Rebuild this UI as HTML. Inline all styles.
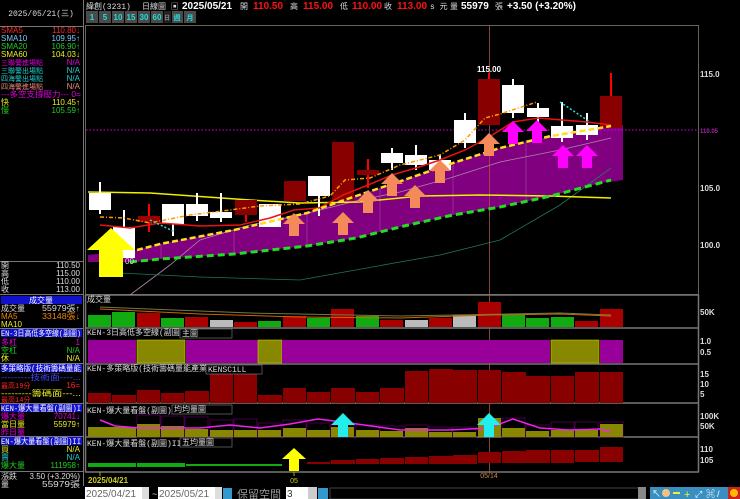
<!DOCTYPE html>
<html><head><meta charset="utf-8"><style>
html,body{margin:0;padding:0;background:#000;width:740px;height:499px;overflow:hidden}
svg{display:block}
text{font-family:"Liberation Sans","Noto Sans CJK TC",sans-serif}
.c{font-family:"Liberation Mono","Noto Sans CJK TC",monospace;font-size:8px}
.s{font-size:7px}
</style></head><body>
<svg width="740" height="499" viewBox="0 0 740 499" xmlns="http://www.w3.org/2000/svg">
<rect width="740" height="499" fill="#000"/>
<!-- left panel -->
<line x1="83.5" y1="0" x2="83.5" y2="486" stroke="#777"/>
<line x1="0" y1="26.5" x2="83" y2="26.5" stroke="#777"/>
<text x="41" y="16" fill="#ddd" font-size="8" text-anchor="middle" class="c">2025/05/21(三)</text>
<g class="c">
<text x="1" y="33" fill="#f22">SMA5</text><text x="80" y="33" fill="#f22" text-anchor="end">110.80↓</text>
<text x="1" y="41" fill="#7cf">SMA10</text><text x="80" y="41" fill="#7cf" text-anchor="end">109.95↑</text>
<text x="1" y="49" fill="#2c2">SMA20</text><text x="80" y="49" fill="#2c2" text-anchor="end">106.90↑</text>
<text x="1" y="57" fill="#ee2">SMA60</text><text x="80" y="57" fill="#ee2" text-anchor="end">104.03↓</text>
<text x="1" y="65" fill="#d0d" class="c s">三聯警進場點</text><text x="80" y="65" fill="#d0d" text-anchor="end">N/A</text>
<text x="1" y="73" fill="#2cc" class="c s">三聯警出場點</text><text x="80" y="73" fill="#2cc" text-anchor="end">N/A</text>
<text x="1" y="81" fill="#2cc" class="c s">四海警出場點</text><text x="80" y="81" fill="#2cc" text-anchor="end">N/A</text>
<text x="1" y="89" fill="#e87" class="c s">四海警進場點</text><text x="80" y="89" fill="#e87" text-anchor="end">N/A</text>
<text x="1" y="97" fill="#d0d" textLength="80" lengthAdjust="spacingAndGlyphs">---多空支撐壓力--- 0=</text>
<text x="1" y="105" fill="#ee2">快</text><text x="80" y="105" fill="#ee2" text-anchor="end">110.45↑</text>
<text x="1" y="113" fill="#2c2">慢</text><text x="80" y="113" fill="#2c2" text-anchor="end">105.59↑</text>
</g>
<line x1="0" y1="261.5" x2="83" y2="261.5" stroke="#777"/>
<g class="c" fill="#ddd">
<text x="1" y="268">開</text><text x="80" y="268" text-anchor="end">110.50</text>
<text x="1" y="276">高</text><text x="80" y="276" text-anchor="end">115.00</text>
<text x="1" y="284">低</text><text x="80" y="284" text-anchor="end">110.00</text>
<text x="1" y="292">收</text><text x="80" y="292" text-anchor="end">113.00</text>
</g>
<line x1="0" y1="294.5" x2="83" y2="294.5" stroke="#777"/>
<rect x="1" y="296" width="81" height="8" fill="#11c"/>
<text x="41" y="303" fill="#fff" class="c" text-anchor="middle">成交量</text>
<g class="c">
<text x="1" y="311" fill="#ddd">成交量</text><text x="80" y="311" fill="#ddd" text-anchor="end" textLength="38" lengthAdjust="spacingAndGlyphs">55979張↑</text>
<text x="1" y="319" fill="#e80">MA5</text><text x="80" y="319" fill="#e80" text-anchor="end" textLength="38" lengthAdjust="spacingAndGlyphs">33148張↓</text>
<text x="1" y="327" fill="#ee2">MA10</text>
</g>
<line x1="0" y1="328.5" x2="83" y2="328.5" stroke="#777"/>
<rect x="1" y="329" width="81" height="8" fill="#11c"/>
<text x="1" y="336" fill="#fff" class="c" textLength="80" lengthAdjust="spacingAndGlyphs">EN-3日高低多空線(副圖)</text>
<g class="c">
<text x="1" y="345" fill="#d0d">多杠</text><text x="80" y="345" fill="#d0d" text-anchor="end">1</text>
<text x="1" y="353" fill="#2c2">空杠</text><text x="80" y="353" fill="#2c2" text-anchor="end">N/A</text>
<text x="1" y="361" fill="#ee2">休</text><text x="80" y="361" fill="#ee2" text-anchor="end">N/A</text>
</g>
<line x1="0" y1="363.5" x2="83" y2="363.5" stroke="#777"/>
<rect x="1" y="364" width="81" height="8" fill="#11c"/>
<text x="1" y="371" fill="#fff" class="c" textLength="80" lengthAdjust="spacingAndGlyphs">多策略版(技術籌碼量能</text>
<g class="c">
<text x="1" y="380" fill="#44f" textLength="80" lengthAdjust="spacingAndGlyphs">---------技術面----...</text>
<text x="1" y="388" fill="#f22" class="c s">最高19分</text><text x="80" y="388" fill="#f22" text-anchor="end">16=</text>
<text x="1" y="396" fill="#ee2" textLength="80" lengthAdjust="spacingAndGlyphs">---------籌碼面---...</text>
<text x="1" y="402" fill="#f22" class="c s">最高14分</text>
</g>
<line x1="0" y1="403.5" x2="83" y2="403.5" stroke="#777"/>
<rect x="1" y="404" width="81" height="8" fill="#11c"/>
<text x="1" y="411" fill="#fff" class="c" textLength="80" lengthAdjust="spacingAndGlyphs">KEN-爆大量看盤(副圖)I</text>
<g class="c">
<text x="1" y="419" fill="#d0d">爆大量</text><text x="80" y="419" fill="#d0d" text-anchor="end">70741↓</text>
<text x="1" y="427" fill="#ee2">當日量</text><text x="80" y="427" fill="#ee2" text-anchor="end">55979↑</text>
<text x="1" y="435" fill="#d0d">昨日量</text>
</g>
<line x1="0" y1="436.5" x2="83" y2="436.5" stroke="#777"/>
<rect x="1" y="437" width="81" height="8" fill="#11c"/>
<text x="1" y="444" fill="#fff" class="c" textLength="80" lengthAdjust="spacingAndGlyphs">EN-爆大量看盤(副圖)II</text>
<g class="c">
<text x="1" y="452" fill="#ee2">買</text><text x="80" y="452" fill="#ee2" text-anchor="end">N/A</text>
<text x="1" y="460" fill="#2cc">賣</text><text x="80" y="460" fill="#2cc" text-anchor="end">N/A</text>
<text x="1" y="468" fill="#2c2">爆大量</text><text x="80" y="468" fill="#2c2" text-anchor="end">111958↑</text>
</g>
<line x1="0" y1="471.5" x2="83" y2="471.5" stroke="#777"/>
<g class="c" fill="#ddd">
<text x="1" y="479">漲跌</text><text x="80" y="479" text-anchor="end">3.50 (+3.20%)</text>
<text x="1" y="487">量</text><text x="80" y="487" text-anchor="end" textLength="38" lengthAdjust="spacingAndGlyphs">55979張</text>
</g>

<!-- header -->
<text x="86" y="9" fill="#ddd" class="c">緯創(3231)</text>
<text x="142" y="9" fill="#ddd" class="c">日線圖 ▣</text>
<text x="182" y="9" font-size="10" font-weight="bold" fill="#fff">2025/05/21</text>
<text x="240" y="9" fill="#ddd" class="c">開</text><text x="253" y="9" font-size="10" font-weight="bold" fill="#f11">110.50</text>
<text x="290" y="9" fill="#ddd" class="c">高</text><text x="303" y="9" font-size="10" font-weight="bold" fill="#f11">115.00</text>
<text x="340" y="9" fill="#ddd" class="c">低</text><text x="352" y="9" font-size="10" font-weight="bold" fill="#f11">110.00</text>
<text x="384" y="9" fill="#ddd" class="c">收</text><text x="397" y="9" font-size="10" font-weight="bold" fill="#f11">113.00</text>
<text x="430" y="9" fill="#ddd" class="c">s 元</text>
<text x="450" y="9" fill="#ddd" class="c">量</text><text x="461" y="9" font-size="10" font-weight="bold" fill="#fff">55979</text>
<text x="495" y="9" fill="#ddd" class="c">張</text>
<text x="507" y="9" font-size="10" font-weight="bold" fill="#fff">+3.50 (+3.20%)</text>
<!-- tabs -->
<g font-size="8" fill="#2dd" font-weight="bold">
<rect x="86" y="11" width="12" height="12" fill="#4a4a4a"/><text x="92" y="20" text-anchor="middle">1</text>
<rect x="99" y="11" width="12" height="12" fill="#4a4a4a"/><text x="105" y="20" text-anchor="middle">5</text>
<rect x="112" y="11" width="12" height="12" fill="#4a4a4a"/><text x="118" y="20" text-anchor="middle">10</text>
<rect x="125" y="11" width="12" height="12" fill="#4a4a4a"/><text x="131" y="20" text-anchor="middle">15</text>
<rect x="138" y="11" width="12" height="12" fill="#4a4a4a"/><text x="144" y="20" text-anchor="middle">30</text>
<rect x="151" y="11" width="12" height="12" fill="#4a4a4a"/><text x="157" y="20" text-anchor="middle">60</text>
<rect x="164" y="11" width="7" height="12" fill="#222"/><text x="167" y="20" text-anchor="middle" fill="#888" font-size="6">日</text>
<rect x="172" y="11" width="11" height="12" fill="#4a4a4a"/><text x="177" y="20" text-anchor="middle" font-size="7">週</text>
<rect x="184" y="11" width="12" height="12" fill="#4a4a4a"/><text x="190" y="20" text-anchor="middle" font-size="7">月</text>
</g>

<!-- chart frames -->
<g fill="none" stroke="#665" stroke-width="1">
<rect x="85.5" y="25.5" width="613" height="269"/>
</g>
<g stroke="#777" stroke-width="1.5">
<line x1="85" y1="295" x2="699" y2="295"/>
<line x1="85" y1="328" x2="699" y2="328"/>
<line x1="85" y1="364" x2="699" y2="364"/>
<line x1="85" y1="403" x2="699" y2="403"/>
<line x1="85" y1="437" x2="699" y2="437"/>
<line x1="85" y1="472" x2="699" y2="472"/>
<line x1="698.5" y1="295" x2="698.5" y2="472"/>
<line x1="85.5" y1="295" x2="85.5" y2="472"/>
</g>
<!-- price axis -->
<g font-size="8" fill="#ddd" font-weight="bold">
<text x="700" y="77">115.0</text>
<text x="700" y="191">105.0</text>
<text x="700" y="248">100.0</text>
<text x="700" y="133" fill="#a2a" font-size="6">110.05</text>
<text x="700" y="315">50K</text>
<text x="700" y="344">1.0</text>
<text x="700" y="355">0.5</text>
<text x="700" y="377">15</text>
<text x="700" y="387">10</text>
<text x="700" y="397">5</text>
<text x="700" y="419">100K</text>
<text x="700" y="429">50K</text>
<text x="700" y="452">110</text>
<text x="700" y="463">105</text>
</g>

<!-- purple band -->
<polygon fill="#800080" points="88,255 137,250 160,244 234,230 307,213 356,196 404,180 453,163 500,148 551,136 600,128 623,125 623,180 600,183 551,196 500,207 453,215 404,226 356,238 307,246 234,254 160,259 137,262 88,262"/>
<g stroke="#a04aa0" stroke-width="0.6">
<line x1="161" y1="244" x2="161" y2="259"/><line x1="234" y1="230" x2="234" y2="254"/><line x1="307" y1="213" x2="307" y2="246"/><line x1="380" y1="188" x2="380" y2="232"/><line x1="453" y1="163" x2="453" y2="215"/><line x1="526" y1="140" x2="526" y2="200"/>
</g>
<polyline fill="none" stroke="#a8a" stroke-width="0.8" points="130,295 170,265 200,240 250,225 300,215 360,200 400,192 450,178 500,162 560,150 611,138"/>
<polyline fill="none" stroke="#275" stroke-width="0.8" points="100,272 200,277 300,280 400,262 440,255 500,240 560,205 611,168"/>
<line x1="86" y1="130" x2="698" y2="130" stroke="#d0d" stroke-width="1" stroke-dasharray="1.5,2"/>
<line x1="489.5" y1="26" x2="489.5" y2="472" stroke="#a54" stroke-width="0.8"/>
<polyline fill="none" stroke="#ee0" stroke-width="1.5" points="88,192 150,193 250,200 300,203 360,202 420,196 480,195 550,196 611,198"/>

<!-- candles -->
<g stroke-width="2">
<line x1="100" y1="182" x2="100" y2="214" stroke="#fff"/><rect x="89" y="193" width="22" height="17" fill="#fff"/>
<line x1="124" y1="210" x2="124" y2="258" stroke="#fff"/><rect x="113" y="227" width="22" height="31" fill="#fff"/>
<line x1="149" y1="204" x2="149" y2="232" stroke="#f00"/><rect x="138" y="216" width="22" height="6" fill="#900"/>
<line x1="173" y1="204" x2="173" y2="236" stroke="#fff"/><rect x="162" y="204" width="22" height="20" fill="#fff"/>
<line x1="197" y1="193" x2="197" y2="221" stroke="#fff"/><rect x="186" y="204" width="22" height="12" fill="#fff"/>
<line x1="221" y1="193" x2="221" y2="222" stroke="#fff"/><rect x="210" y="212" width="22" height="6" fill="#fff"/>
<line x1="246" y1="200" x2="246" y2="222" stroke="#f00"/><rect x="235" y="200" width="22" height="15" fill="#800"/>
<line x1="270" y1="204" x2="270" y2="227" stroke="#fff"/><rect x="259" y="204" width="22" height="23" fill="#fff"/>
<rect x="284" y="181" width="22" height="20" fill="#800"/>
<line x1="319" y1="176" x2="319" y2="216" stroke="#fff"/><rect x="308" y="176" width="22" height="20" fill="#fff"/>
<rect x="332" y="142" width="22" height="58" fill="#800"/>
<line x1="368" y1="159" x2="368" y2="188" stroke="#f00"/><rect x="357" y="170" width="22" height="5" fill="#800"/>
<line x1="392" y1="148" x2="392" y2="170" stroke="#fff"/><rect x="381" y="153" width="22" height="10" fill="#fff"/>
<line x1="416" y1="145" x2="416" y2="170" stroke="#fff"/><rect x="405" y="155" width="22" height="10" fill="#fff"/>
<line x1="440" y1="155" x2="440" y2="175" stroke="#fff"/><rect x="429" y="160" width="22" height="10" fill="#fff"/>
<line x1="465" y1="113" x2="465" y2="148" stroke="#fff"/><rect x="454" y="120" width="22" height="23" fill="#fff"/>
<line x1="489" y1="73" x2="489" y2="125" stroke="#f00"/><rect x="478" y="79" width="22" height="46" fill="#800"/>
<line x1="513" y1="79" x2="513" y2="118" stroke="#fff"/><rect x="502" y="85" width="22" height="28" fill="#fff"/>
<line x1="538" y1="103" x2="538" y2="123" stroke="#fff"/><rect x="527" y="108" width="22" height="9" fill="#fff"/>
<line x1="562" y1="102" x2="562" y2="142" stroke="#fff"/><rect x="551" y="126" width="22" height="12" fill="#fff"/>
<line x1="587" y1="113" x2="587" y2="140" stroke="#fff"/><rect x="576" y="125" width="22" height="10" fill="#fff"/>
<line x1="611" y1="73" x2="611" y2="128" stroke="#f00"/><rect x="600" y="96" width="22" height="32" fill="#800"/>
</g>
<text x="489" y="72" fill="#fff" font-size="8" font-weight="bold" text-anchor="middle">115.00</text>
<polyline fill="none" stroke="#e11" stroke-width="1.5" points="100,225 130,228 160,223 200,226 240,225 270,218 294,210 319,208 343,195 368,185 392,175 416,168 440,160 465,150 489,137 513,122 538,118 562,120 587,122 611,125"/>
<polyline fill="none" stroke="#f90" stroke-width="1.5" stroke-dasharray="4,2,1,2" points="100,217 124,218 150,223 190,215 230,210 260,206 300,204 330,196 345,180 370,178 400,165 440,155 465,140 485,118 500,114 537,102"/>
<polyline fill="none" stroke="#3dd" stroke-width="1.5" stroke-dasharray="2,2" points="560,102 590,122"/>
<polyline fill="none" stroke="#3dd" stroke-width="1.5" stroke-dasharray="2,2" points="150,220 175,232"/>
<polyline fill="none" stroke="#fd2" stroke-width="2.5" stroke-dasharray="6,3" points="137,250 160,244 234,230 307,213 356,196 404,180 453,163 500,148 551,136 600,128 611,126"/>
<polyline fill="none" stroke="#2d2" stroke-width="3" stroke-dasharray="7,4" points="130,262 160,259 234,254 307,246 356,238 404,226 453,215 500,207 551,196 600,183 611,180"/>

<!-- arrows -->
<polygon fill="#ff0" points="111,228 135,250 123,250 123,277 99,277 99,250 87,250"/>
<text x="125" y="264" fill="#ddd" font-size="8">00</text>
<g fill="#f48a5a">
<polygon points="294,213 305,224 299,224 299,236 289,236 289,224 283,224"/>
<polygon points="343,212 354,223 348,223 348,235 338,235 338,223 332,223"/>
<polygon points="368,190 379,201 373,201 373,213 363,213 363,201 357,201"/>
<polygon points="392,173 403,184 397,184 397,196 387,196 387,184 381,184"/>
<polygon points="415,185 426,196 420,196 420,208 410,208 410,196 404,196"/>
<polygon points="440,160 451,171 445,171 445,183 435,183 435,171 429,171"/>
<polygon points="489,133 500,144 494,144 494,156 484,156 484,144 478,144"/>
</g>
<g fill="#f0f">
<polygon points="513,121 524,132 518,132 518,144 508,144 508,132 502,132"/>
<polygon points="537,120 548,131 542,131 542,143 532,143 532,131 526,131"/>
<polygon points="563,145 574,156 568,156 568,168 558,168 558,156 552,156"/>
<polygon points="587,145 598,156 592,156 592,168 582,168 582,156 576,156"/>
</g>

<!-- volume panel -->
<text x="87" y="302" fill="#ddd" class="c">成交量</text>
<g>
<rect x="88" y="315" width="23" height="12" fill="#1a1"/>
<rect x="112" y="312" width="23" height="15" fill="#1a1"/>
<rect x="137" y="313" width="23" height="14" fill="#a00"/>
<rect x="161" y="318" width="23" height="9" fill="#1a1"/>
<rect x="185" y="317" width="23" height="10" fill="#a00"/>
<rect x="210" y="320" width="23" height="7" fill="#bbb"/>
<rect x="234" y="322" width="23" height="5" fill="#a00"/>
<rect x="258" y="321" width="23" height="6" fill="#1a1"/>
<rect x="283" y="316" width="23" height="11" fill="#a00"/>
<rect x="307" y="318" width="23" height="9" fill="#1a1"/>
<rect x="331" y="309" width="23" height="18" fill="#a00"/>
<rect x="356" y="316" width="23" height="11" fill="#1a1"/>
<rect x="380" y="320" width="23" height="7" fill="#a00"/>
<rect x="405" y="320" width="23" height="7" fill="#bbb"/>
<rect x="429" y="318" width="23" height="9" fill="#a00"/>
<rect x="453" y="315" width="23" height="12" fill="#bbb"/>
<rect x="478" y="302" width="23" height="25" fill="#a00"/>
<rect x="502" y="314" width="23" height="13" fill="#1a1"/>
<rect x="526" y="318" width="23" height="9" fill="#1a1"/>
<rect x="551" y="317" width="23" height="10" fill="#1a1"/>
<rect x="575" y="321" width="23" height="6" fill="#a00"/>
<rect x="600" y="309" width="23" height="18" fill="#a00"/>
</g>
<polyline fill="none" stroke="#c60" stroke-width="1" points="100,309 200,314 300,317 400,318 489,315 560,314 611,316"/>
<polyline fill="none" stroke="#774" stroke-width="1" points="100,307 250,313 400,316 560,313 611,315"/>

<!-- panel 2 -->
<g>
<rect x="88" y="340" width="48" height="23" fill="#909"/>
<rect x="137" y="340" width="48" height="23" fill="#880" stroke="#cc0" stroke-width="0.6"/>
<rect x="186" y="340" width="72" height="23" fill="#909"/>
<rect x="258" y="340" width="24" height="23" fill="#880" stroke="#cc0" stroke-width="0.6"/>
<rect x="282" y="340" width="268" height="23" fill="#909"/>
<rect x="551" y="340" width="48" height="23" fill="#880" stroke="#cc0" stroke-width="0.6"/>
<rect x="600" y="340" width="23" height="23" fill="#909"/>
</g>
<text x="87" y="335" fill="#ddd" class="c">KEN-3日高低多空線(副圖)</text>
<rect x="180" y="329" width="52" height="9" fill="#000" stroke="#888" stroke-width="0.6"/>
<text x="182" y="336" fill="#ddd" class="c">主圖</text>

<!-- panel 3 -->
<rect x="88" y="393" width="23" height="10" fill="#800"/>
<rect x="112" y="395" width="24" height="8" fill="#800"/>
<rect x="137" y="390" width="23" height="13" fill="#800"/>
<rect x="161" y="393" width="23" height="10" fill="#800"/>
<rect x="185" y="391" width="24" height="12" fill="#800"/>
<rect x="210" y="374" width="23" height="29" fill="#800"/>
<rect x="234" y="372" width="23" height="31" fill="#800"/>
<rect x="258" y="395" width="24" height="8" fill="#800"/>
<rect x="283" y="388" width="23" height="15" fill="#800"/>
<rect x="307" y="392" width="23" height="11" fill="#800"/>
<rect x="331" y="388" width="24" height="15" fill="#800"/>
<rect x="356" y="392" width="23" height="11" fill="#800"/>
<rect x="380" y="388" width="24" height="15" fill="#800"/>
<rect x="405" y="371" width="23" height="32" fill="#800"/>
<rect x="429" y="369" width="24" height="34" fill="#800"/>
<rect x="453" y="370" width="24" height="33" fill="#800"/>
<rect x="478" y="370" width="23" height="33" fill="#800"/>
<rect x="502" y="372" width="24" height="31" fill="#800"/>
<rect x="526" y="376" width="24" height="27" fill="#800"/>
<rect x="551" y="376" width="23" height="27" fill="#800"/>
<rect x="575" y="372" width="24" height="31" fill="#800"/>
<rect x="600" y="372" width="23" height="31" fill="#800"/>
<text x="87" y="371" fill="#ddd" class="c">KEN-多策略版(技術籌碼量能產業)</text>
<rect x="206" y="365" width="56" height="9" fill="#000" stroke="#888" stroke-width="0.6"/>
<text x="208" y="372" fill="#ddd" class="c">KENSC1LL</text>

<!-- panel 4 -->
<g fill="none" stroke="#404" stroke-width="1">
<rect x="137" y="415" width="23" height="22"/><rect x="161" y="416" width="23" height="21"/><rect x="185" y="417" width="23" height="20"/><rect x="210" y="420" width="23" height="17"/><rect x="234" y="419" width="23" height="18"/><rect x="258" y="423" width="23" height="14"/><rect x="283" y="420" width="23" height="17"/><rect x="307" y="423" width="23" height="14"/><rect x="331" y="425" width="23" height="12"/><rect x="356" y="425" width="23" height="12"/><rect x="380" y="426" width="23" height="11"/><rect x="405" y="425" width="23" height="12"/><rect x="429" y="427" width="23" height="10"/><rect x="453" y="427" width="23" height="10"/><rect x="502" y="418" width="23" height="19"/><rect x="526" y="425" width="23" height="12"/><rect x="551" y="422" width="23" height="15"/><rect x="575" y="422" width="23" height="15"/><rect x="600" y="422" width="23" height="15"/>
</g>
<g fill="#880">
<rect x="88" y="427" width="48" height="10"/><rect x="137" y="424" width="23" height="13"/><rect x="161" y="426" width="23" height="11"/><rect x="185" y="429" width="23" height="8"/><rect x="210" y="430" width="23" height="7"/><rect x="234" y="430" width="23" height="7"/><rect x="258" y="430" width="23" height="7"/><rect x="283" y="428" width="23" height="9"/><rect x="307" y="430" width="23" height="7"/><rect x="331" y="427" width="23" height="10"/><rect x="356" y="430" width="23" height="7"/><rect x="380" y="431" width="23" height="6"/><rect x="405" y="428" width="23" height="9"/><rect x="429" y="432" width="23" height="5"/><rect x="453" y="432" width="23" height="5"/><rect x="478" y="418" width="23" height="19"/><rect x="502" y="428" width="23" height="9"/><rect x="526" y="431" width="23" height="6"/><rect x="551" y="430" width="23" height="7"/><rect x="575" y="430" width="23" height="7"/><rect x="600" y="424" width="23" height="13"/>
</g>
<polyline fill="none" stroke="#e2e" stroke-width="1.5" points="100,420 115,426 140,428 200,428 230,425 260,428 290,424 318,419 350,423 400,430 450,430 489,428 513,419 540,428 570,430 600,429 611,432"/>
<text x="87" y="413" fill="#ddd" class="c">KEN-爆大量看盤(副圖)I</text>
<rect x="172" y="405" width="60" height="9" fill="#000" stroke="#888" stroke-width="0.6"/>
<text x="174" y="412" fill="#ddd" class="c">均均量圖</text>
<g fill="#2ee">
<polygon points="343,413 355,425 348,425 348,437 338,437 338,425 331,425"/>
<polygon points="489,413 501,425 494,425 494,437 484,437 484,425 477,425"/>
</g>

<!-- panel 5 -->
<text x="87" y="446" fill="#ddd" class="c">KEN-爆大量看盤(副圖)III</text>
<rect x="180" y="438" width="52" height="9" fill="#000" stroke="#888" stroke-width="0.6"/>
<text x="182" y="445" fill="#ddd" class="c">五均量圖</text>
<g fill="#1a1"><rect x="88" y="463" width="48" height="4"/><rect x="137" y="463" width="48" height="4"/><rect x="186" y="464" width="96" height="2"/></g>
<g fill="#800">
<rect x="307" y="462" width="23" height="2"/><rect x="331" y="460" width="24" height="4"/><rect x="356" y="459" width="23" height="5"/><rect x="380" y="458" width="24" height="6"/><rect x="405" y="457" width="23" height="7"/><rect x="429" y="456" width="24" height="8"/><rect x="453" y="455" width="24" height="9"/><rect x="478" y="452" width="23" height="11"/><rect x="502" y="451" width="24" height="12"/><rect x="526" y="450" width="24" height="13"/><rect x="551" y="450" width="23" height="13"/><rect x="575" y="450" width="24" height="12"/><rect x="600" y="447" width="23" height="15"/>
</g>
<polygon fill="#ff0" points="294,448 306,459 299,459 299,471 289,471 289,459 282,459"/>

<!-- dates -->
<line x1="100" y1="472" x2="100" y2="476" stroke="#aa0"/>
<text x="88" y="483" fill="#cc2" font-size="8" font-weight="bold">2025/04/21</text>
<line x1="294" y1="472" x2="294" y2="476" stroke="#aa0"/>
<text x="294" y="483" fill="#cc2" font-size="7" text-anchor="middle">05</text>
<text x="489" y="478" fill="#c84" font-size="7" text-anchor="middle">05/14</text>

<!-- bottom toolbar -->
<rect x="85" y="487" width="57" height="12" fill="#fff"/>
<text x="86" y="497" fill="#666" font-size="10" font-family="Liberation Serif">2025/04/21</text>
<rect x="142" y="487" width="7" height="12" fill="#ddd"/>
<text x="152" y="497" fill="#ccc" font-size="9">~</text>
<rect x="158" y="487" width="57" height="12" fill="#fff"/>
<text x="159" y="497" fill="#666" font-size="10" font-family="Liberation Serif">2025/05/21</text>
<rect x="215" y="487" width="7" height="12" fill="#ddd"/>
<rect x="223" y="488" width="9" height="11" fill="#39c"/>
<text x="237" y="498" fill="#999" font-size="11" font-family="Noto Serif CJK SC,serif">保留空間</text>
<rect x="286" y="487" width="22" height="12" fill="#fff"/>
<text x="287" y="497" fill="#333" font-size="10">3</text>
<rect x="308" y="487" width="9" height="12" fill="#ccc"/>
<rect x="318" y="488" width="10" height="11" fill="#39c"/>
<rect x="330" y="488" width="310" height="11" fill="#000" stroke="#444"/>
<rect x="638" y="487" width="8" height="12" fill="#888"/>
<rect x="650" y="487" width="90" height="12" fill="#3a8fc0"/>
<g fill="#fff" font-size="9">
<text x="652" y="497">↖</text>
<circle cx="666" cy="493" r="4" fill="#f7c080"/>
<rect x="673" y="492" width="7" height="2" fill="#ee3"/>
<text x="684" y="498" fill="#ee3" font-size="11">+</text>
<text x="695" y="497">⤢</text>
<text x="706" y="497">⌘</text>
<text x="717" y="497">/</text>
<rect x="728" y="487" width="12" height="12" fill="#c22"/>
<circle cx="734" cy="493" r="4" fill="#fb0"/>
</g>
</svg>
</body></html>
